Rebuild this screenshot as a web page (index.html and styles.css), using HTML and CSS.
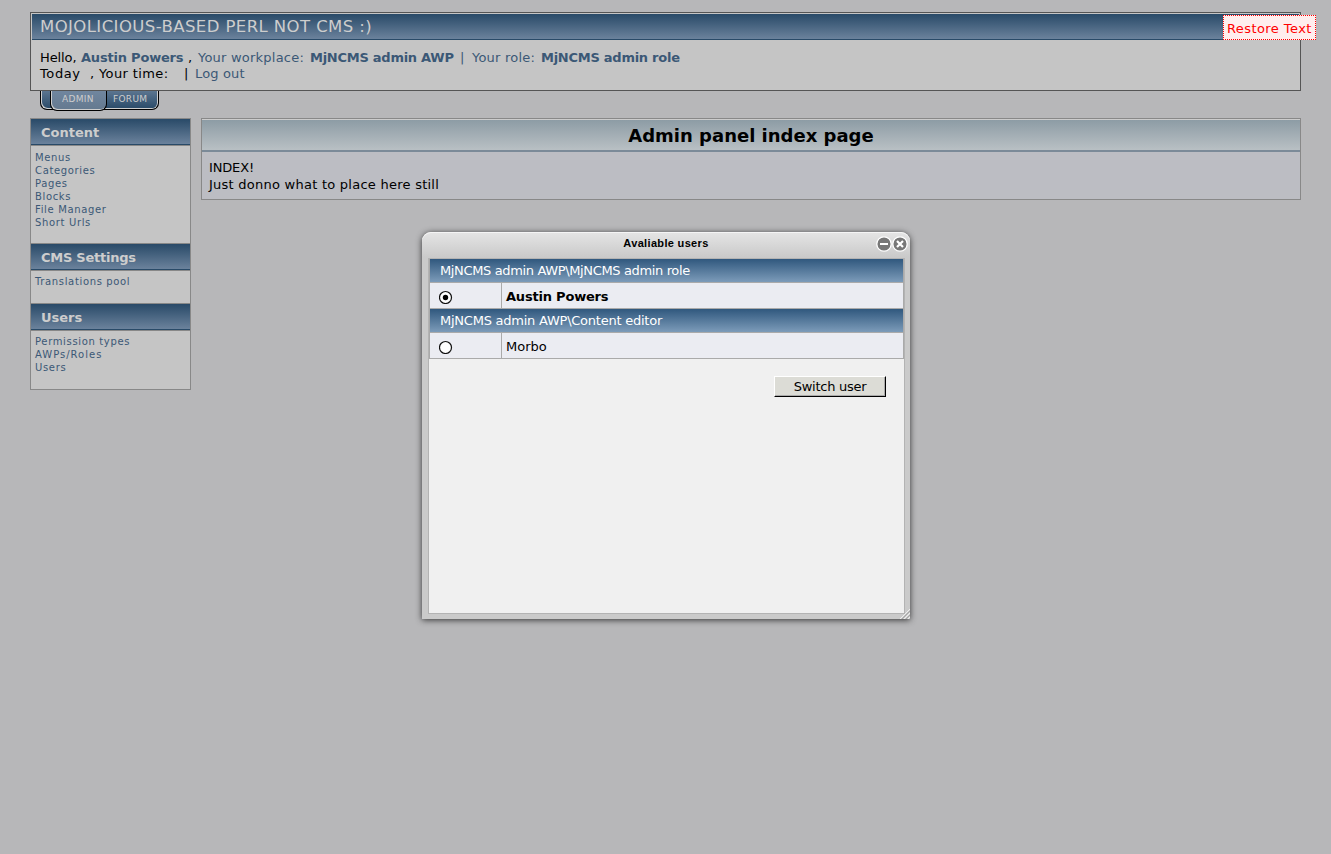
FILE: index.html
```html
<!DOCTYPE html>
<html lang="en">
<head>
<meta charset="utf-8">
<title>Admin panel index page</title>
<link rel="stylesheet" href="styles.css">
</head>
<body>
<header class="top">
  <h1 class="brand">MOJOLICIOUS-BASED PERL NOT CMS :)</h1>
  <div class="hello">
    <div class="line"><span class="w-hello">Hello,</span><b class="link w-name">Austin Powers</b><span class="w-comma">,</span><span class="link w-place">Your workplace:</span><b class="link w-awp">MjNCMS admin AWP</b><span class="link w-bar">|</span><span class="link w-role">Your role:</span><b class="link">MjNCMS admin role</b></div>
    <div class="line"><span class="w-today">Today</span><span class="w-time">, Your time:</span><span class="w-sep">|</span><span class="link w-out">Log out</span></div>
  </div>
</header>
<nav class="tabs"><a class="tab-active">ADMIN</a><a class="tab">FORUM</a></nav>
<div class="columns">
  <aside class="side">
    <h2>Content</h2>
    <ul class="first"><li>Menus</li><li>Categories</li><li>Pages</li><li>Blocks</li><li>File Manager</li><li>Short Urls</li></ul>
    <h2 class="tight">CMS Settings</h2>
    <ul><li>Translations pool</li></ul>
    <h2>Users</h2>
    <ul><li>Permission types</li><li class="roles">AWPs/Roles</li><li>Users</li></ul>
  </aside>
  <main class="panel">
    <h2>Admin panel index page</h2>
    <div class="panel-body"><p class="index">INDEX!</p><p>Just donno what to place here still</p></div>
  </main>
</div>
<div class="restore">Restore Text</div>
<section class="window">
  <div class="win-title"><span>Avaliable users</span>
    <svg class="win-buttons" width="32" height="16" viewBox="0 0 32 16"><g fill="#777" stroke="#fff" stroke-width="1.3"><circle cx="8" cy="8" r="7.2"/><circle cx="24" cy="8" r="7.2"/></g><path d="M4 8h8M21 5l6 6M27 5l-6 6" stroke="#fff" stroke-width="2.2"/></svg>
  </div>
  <div class="win-body">
    <div class="users">
      <div class="group group-role">MjNCMS admin AWP\MjNCMS admin role</div>
      <div class="row"><span class="pick"><svg width="14" height="14"><circle cx="6.5" cy="7.5" r="6" fill="#fff" stroke="#111" stroke-width="1.2"/><circle cx="6.5" cy="7.5" r="2.7"/></svg></span><b>Austin Powers</b></div>
      <div class="group">MjNCMS admin AWP\Content editor</div>
      <div class="row"><span class="pick"><svg width="14" height="14"><circle cx="6.5" cy="7.5" r="6" fill="#fff" stroke="#111" stroke-width="1.2"/></svg></span><span>Morbo</span></div>
    </div>
    <button class="switch">Switch user</button>
  </div>
  <svg class="grip" width="10" height="10"><path d="M0 10L10 0M4 10l6-6M8 10l2-2" stroke="#eee"/><path d="M2 10l8-8M6 10l4-4" stroke="#a5a5a5"/></svg>
</section>
</body>
</html>
```
FILE: styles.css
```css
* { box-sizing: border-box; }
body { margin: 0; padding: 12px 30px 0; height: 854px; overflow: hidden; background: #b7b7b9; font: 13px/16px "DejaVu Sans", sans-serif; color: #000; }
h1, h2, ul, p { margin: 0; padding: 0; list-style: none; }
b { letter-spacing: -.2px; }
.link { color: #3b5876; }
.top { height: 79px; border: 1px solid #555; background: #c5c5c5; padding: 1px 1px 0; }
.brand { height: 26px; padding-left: 8px; font-size: 16.5px; font-weight: 400; line-height: 25px; letter-spacing: .42px; color: #cdcdcd; background: linear-gradient(#294a68, #6b829c); border-bottom: 1px solid #294a68; white-space: nowrap; }
.hello { padding: 10px 8px; }
.line { display: flex; height: 16px; white-space: pre; }
.line b { letter-spacing: -.26px; }
.line .w-name { letter-spacing: -.2px; }
.w-hello { width: 41px; letter-spacing: -.1px; } .w-name { width: 107px; } .w-comma { width: 10px; } .w-place { width: 112px; letter-spacing: .22px; }
.w-awp { width: 150px; } .w-bar { width: 12px; } .w-role { width: 69px; letter-spacing: .22px; }
.w-today { width: 50px; letter-spacing: .6px; } .w-time { width: 94px; letter-spacing: .38px; } .w-sep { width: 11px; }
.w-out { letter-spacing: .15px; }
.tabs { display: flex; width: 119px; height: 19px; margin-left: 10px; padding-left: 10px; border: 1px solid #000; border-top: 0; border-radius: 0 0 7px 7px; background: linear-gradient(#5b7590, #294a68); box-shadow: inset 1px -1px #cdcdcd, inset -1px 0 #cdcdcd; font-size: 9px; line-height: 16px; letter-spacing: .3px; color: #cdcdcd; }
.tab-active { width: 57px; height: 20px; padding-left: 11px; border: 1px solid #000; border-width: 0 1px 1px; border-radius: 0 0 7px 7px; background: linear-gradient(#70869f, #64798f); box-shadow: inset 1px -1px #cdcdcd; margin-left: -1px; }
.tab { padding-left: 6px; }
.columns { display: flex; gap: 10px; margin-top: 8px; align-items: flex-start; }
.side { width: 161px; height: 272px; border: 1px solid #888; background: #c5c5c5; }
.side h2 { height: 27px; padding-left: 10px; font-size: 13px; line-height: 27px; color: #cdcdcd; background: linear-gradient(#294a68, #6b829c 25px, #294a68 25px, #294a68 26px, #888 26px); }
.side .tight { letter-spacing: -.25px; }
.side ul { padding: 4px 4px 15px; font-size: 10px; line-height: 13px; letter-spacing: .65px; color: #3b5876; border-bottom: 1px solid #888; }
.side ul:last-child { border: 0; }
.side .first { padding-top: 5px; padding-bottom: 14px; }
.roles { letter-spacing: 1px; }
.panel { flex: 1; height: 82px; border: 1px solid #888; background: #bcbdc3; }
.panel h2 { height: 33px; border-top: 1px solid #ccc; border-bottom: 2px solid #7b8a98; background: linear-gradient(#8d9ca5, #b9c0c4); text-align: center; font-size: 18px; line-height: 31px; }
.panel-body { padding: 7px; line-height: 17px; letter-spacing: .25px; }
.index { letter-spacing: -.15px; }
.restore { position: absolute; left: 1223px; top: 15px; width: 93px; height: 25px; border: 1px dotted red; background: #fee; color: red; padding: 5px 3px; letter-spacing: .42px; white-space: nowrap; }
.window { position: absolute; left: 422px; top: 232px; width: 488px; height: 387px; padding: 0 5px 5px 6px; background: linear-gradient(#e5e5e5, #cacaca 25px); border-radius: 9px 9px 0 0; box-shadow: 0 1px 6px #333, inset 0 1px #f5f5f5; }
.win-title { position: relative; height: 26px; padding-right: 1px; text-align: center; font: bold 11px/23px "Liberation Sans", Arial, sans-serif; letter-spacing: .33px; }
.win-buttons { position: absolute; right: -3px; top: 4px; }
.win-body { height: 356px; border: 1px solid #b3b3b3; background: #f0f0f0; }
.users { border: 1px solid #aaa; border-width: 0 1px; }
.group { height: 24px; padding-left: 10px; line-height: 24px; letter-spacing: -.24px; color: #fff; border-bottom: 1px solid #aaa; background: linear-gradient(#30587e, #7c9bb9); }
.group-role { letter-spacing: -.36px; }
.row { display: flex; height: 26px; border-bottom: 1px solid #aaa; background: #ebecf2; line-height: 28px; }
.pick { width: 72px; border-right: 1px solid #aaa; margin-right: 4px; padding: 7px 0 0 9px; line-height: 0; }
.switch { display: block; width: 112px; height: 21px; margin: 17px 17px 0 auto; padding: 0; border: 1px solid; border-color: #fff #000 #000 #fff; box-shadow: inset -1px -1px #aaa; background: #dcdcd6; font: 13px/19px "DejaVu Sans", sans-serif; letter-spacing: -.25px; color: #000; position: relative; left: -1px; }
.grip { position: absolute; right: 0; bottom: 0; }
```
